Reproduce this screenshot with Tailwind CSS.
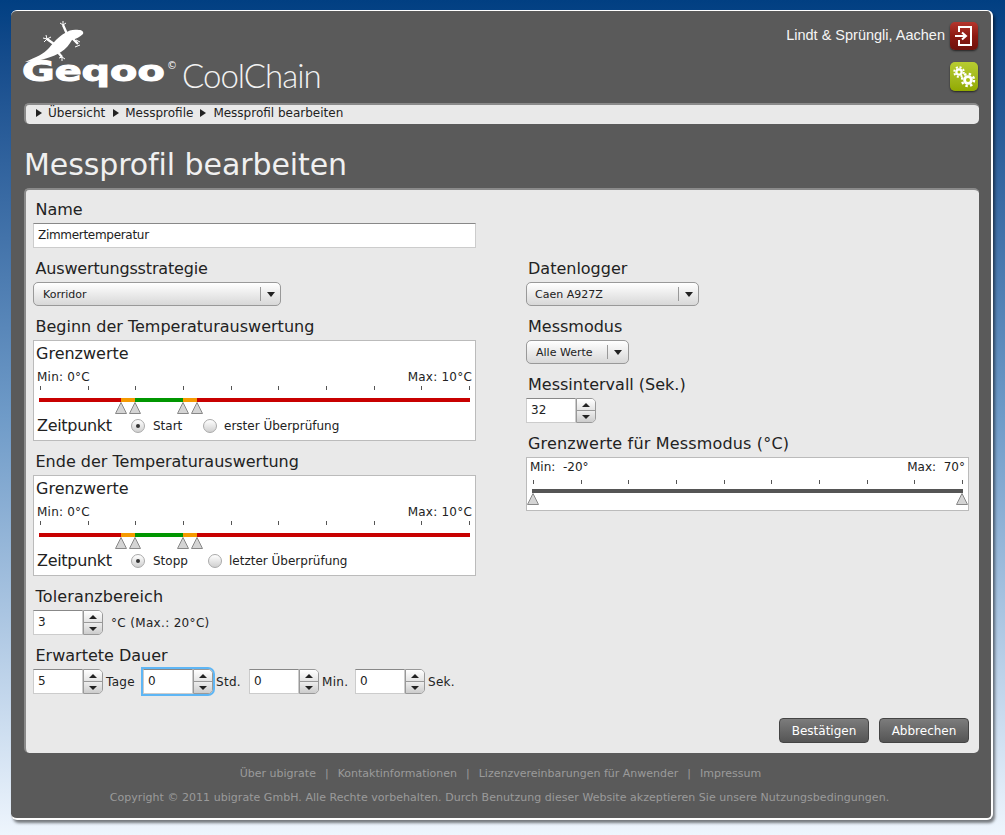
<!DOCTYPE html>
<html lang="de">
<head>
    <meta charset="UTF-8">
    <title>Messprofil bearbeiten</title>
    <script src="https://cdn.jsdelivr.net/npm/@tailwindcss/browser@4"></script>
</head>
<body class="h-[835px] overflow-hidden bg-gradient-to-b from-[#013f82] via-[#6f9bc8] to-[#eef5fd] [font-family:'DejaVu_Sans',sans-serif] text-[#222]">
    <div class="ml-[11px] pt-[10px]">
        <div class="w-[982px] h-[810px] bg-[#5a5a5a] rounded-[6px] border-t border-r-2 border-b-2 border-white shadow-[2px_3px_3px_rgba(0,0,0,0.5)] pl-[13px] pr-[12px]">

            <!-- Kopfbereich -->
            <div class="flex justify-between h-[92px]">
                <div class="relative w-[310px]">
                    <svg class="absolute left-[-4px] top-[5px]" width="70" height="50" viewBox="20 15 70 50" fill="white" stroke="white">
                        <path stroke="none" d="M25 61C36 56 44 53 49 47C54 41 58 36 65 32C69 29 74 28 79 29C82 29 84 31 83 33C80 36 76 38 72 39C69 44 66 48 61 51C54 56 40 60 25 61Z"/>
                        <path fill="none" stroke-width="2.4" d="M67 33L63 24M72 37L78 43M54 43L47 38M56 49L62 56"/>
                        <path fill="none" stroke-width="1" d="M60 22L63 24L66 22M63 24V20M76 39L80 41M75 46L80 44M46 34L47 38L51 36M43 37L47 38L44 41M59 57L62 56L65 58M62 56V60"/>
                    </svg>
                    <span class="absolute left-[-2px] top-[44px] origin-left scale-x-[1.42] font-bold text-[28px] leading-[34px] text-white [-webkit-text-stroke:1px_white]">Geqoo</span>
                    <span class="absolute left-[143px] top-[50px] text-[10px] leading-[10px] text-white">©</span>
                    <span class="absolute left-[158px] top-[45px] [font-family:'Lato',sans-serif] font-light text-[33px] leading-[38px] tracking-[-1px] text-[#f2f2f2]">CoolChain</span>
                </div>
                <div class="flex flex-col items-end pt-[11px] pr-[1px] gap-[12px]">
                    <div class="flex items-center gap-[5px]">
                        <span class="[font-family:'Liberation_Sans',sans-serif] text-[14.5px] text-[#f5f5f5]">Lindt &amp; Sprüngli, Aachen</span>
                        <div class="w-[28px] h-[28px] rounded-[5px] bg-gradient-to-b from-[#b4352d] via-[#8c1a12] to-[#6f130d] shadow-[0_1px_2px_rgba(0,0,0,0.6)]">
                            <svg width="28" height="28" viewBox="0 0 28 28" fill="none" stroke="white" stroke-width="2">
                                <path d="M9 10V5H21V23H9V18"/>
                                <path d="M5 14H15M12 10.5L16 14L12 17.5"/>
                            </svg>
                        </div>
                    </div>
                    <div class="w-[28px] h-[29px] rounded-[5px] bg-gradient-to-b from-[#b8cc30] to-[#92aa00] shadow-[0_1px_2px_rgba(0,0,0,0.6)]">
                        <svg width="28" height="29" viewBox="0 0 28 29" fill="white">
                            <circle cx="9" cy="10" r="3.8"/>
                            <circle cx="9" cy="10" r="4.8" fill="none" stroke="white" stroke-width="2" stroke-dasharray="2 1.77"/>
                            <circle cx="9" cy="10" r="1.5" fill="#a8bf14"/>
                            <circle cx="18" cy="18" r="4.8"/>
                            <circle cx="18" cy="18" r="6" fill="none" stroke="white" stroke-width="2.4" stroke-dasharray="2.4 2.31"/>
                            <circle cx="18" cy="18" r="2" fill="#a8bf14"/>
                        </svg>
                    </div>
                </div>
            </div>

            <!-- Brotkrumen -->
            <div class="h-[21px] rounded-[5px] bg-[#e9e9e9] border-t-2 border-l-2 border-[#8a8a8a] pl-[10px] pb-[3px] flex items-center text-[12px]">
                <span class="w-0 h-0 border-y-[4px] border-y-transparent border-l-[6px] border-l-[#222]"></span>
                <span class="ml-[6px]">Übersicht</span>
                <span class="ml-[8px] w-0 h-0 border-y-[4px] border-y-transparent border-l-[6px] border-l-[#222]"></span>
                <span class="ml-[6px]">Messprofile</span>
                <span class="ml-[7px] w-0 h-0 border-y-[4px] border-y-transparent border-l-[6px] border-l-[#222]"></span>
                <span class="ml-[7px]">Messprofil bearbeiten</span>
            </div>

            <h1 class="h-[64px] pt-[23px] text-[30px] leading-[36px] tracking-[-0.08px] font-normal text-[#f0f0f0] whitespace-nowrap">Messprofil bearbeiten</h1>

            <!-- Formular -->
            <div class="relative h-[565px] rounded-[5px] bg-[#e9e9e9] border-t-2 border-l-2 border-[#8a8a8a] pl-[7px] pt-[9px] grid grid-cols-[443px_443px] gap-x-[50px] content-start">

                <!-- linke Spalte -->
                <div>
                    <label class="block h-5 leading-[22px] mb-1 pl-[2.5px] text-[16px]">Name</label>
                    <div class="h-[25px] mb-2.5 bg-white border border-[#ccc] border-t-[#888] pl-[4px] text-[12px] leading-[22px] tracking-[-0.3px]">Zimmertemperatur</div>

                    <label class="block h-5 leading-[22px] mb-1 pl-[2.5px] text-[16px] tracking-[-0.17px]">Auswertungsstrategie</label>
                    <div class="w-[248px] h-[24px] mb-2.5 flex items-center rounded-[5px] border border-[#999] bg-gradient-to-b from-white to-[#d8d8d8] text-[11px] leading-[24px]">
                        <span class="pl-[9px] w-[226px] pt-[1px]">Korridor</span>
                        <span class="w-px h-[14px] bg-[#999]"></span>
                        <span class="ml-[6px] w-0 h-0 border-x-[4px] border-x-transparent border-t-[5px] border-t-[#222]"></span>
                    </div>

                    <label class="block h-5 leading-[22px] mb-1 pl-[2.5px] text-[16px]">Beginn der Temperaturauswertung</label>
                    <div class="h-[101px] mb-2.5 bg-white border border-[#bbb]">
                        <div class="h-[22px] mt-[2px] pl-[2px] leading-[22px] text-[16px]">Grenzwerte</div>
                        <div class="h-4 mt-[3px] px-[3px] flex justify-between text-[12px] leading-[18px] tracking-[0.22px]"><span>Min: 0°C</span><span>Max: 10°C</span></div>
                        <div class="relative h-[30px] mt-[2px]">
                            <div class="ml-[6px] w-[430px] h-[5px] flex justify-between">
                                <i class="w-px h-[4px] bg-[#555]"></i><i class="w-px h-[4px] bg-[#555]"></i><i class="w-px h-[4px] bg-[#555]"></i><i class="w-px h-[4px] bg-[#555]"></i><i class="w-px h-[4px] bg-[#555]"></i><i class="w-px h-[4px] bg-[#555]"></i><i class="w-px h-[4px] bg-[#555]"></i><i class="w-px h-[4px] bg-[#555]"></i><i class="w-px h-[4px] bg-[#555]"></i><i class="w-px h-[4px] bg-[#555]"></i>
                            </div>
                            <div class="ml-[5px] mt-[7px] w-[431px] h-[4px] flex">
                                <i class="w-[82px] bg-[#c80000]"></i><i class="w-[14px] bg-[#f59a00]"></i><i class="w-[48px] bg-[#009600]"></i><i class="w-[14px] bg-[#f59a00]"></i><i class="flex-1 bg-[#c80000]"></i>
                            </div>
                            <svg class="absolute left-[81px] top-[16px]" width="12" height="12"><path d="M6 .5L11.5 11.5H.5Z" fill="#d4d4d4" stroke="#888"/></svg>
                            <svg class="absolute left-[95px] top-[16px]" width="12" height="12"><path d="M6 .5L11.5 11.5H.5Z" fill="#d4d4d4" stroke="#888"/></svg>
                            <svg class="absolute left-[143px] top-[16px]" width="12" height="12"><path d="M6 .5L11.5 11.5H.5Z" fill="#d4d4d4" stroke="#888"/></svg>
                            <svg class="absolute left-[157px] top-[16px]" width="12" height="12"><path d="M6 .5L11.5 11.5H.5Z" fill="#d4d4d4" stroke="#888"/></svg>
                        </div>
                        <div class="h-5 pl-[3px] flex items-center">
                            <span class="w-[94px] text-[16px] tracking-[-0.3px]">Zeitpunkt</span>
                            <span class="w-[14px] h-[14px] rounded-full border border-[#aaa] bg-gradient-to-b from-white to-[#d0d0d0] flex items-center justify-center"><i class="w-[4px] h-[4px] rounded-full bg-[#333]"></i></span>
                            <span class="ml-[8px] w-[50px] text-[12px]">Start</span>
                            <span class="w-[14px] h-[14px] rounded-full border border-[#aaa] bg-gradient-to-b from-white to-[#d0d0d0]"></span>
                            <span class="ml-[7px] text-[12px]">erster Überprüfung</span>
                        </div>
                    </div>

                    <label class="block h-5 leading-[22px] mb-1 pl-[2.5px] text-[16px]">Ende der Temperaturauswertung</label>
                    <div class="h-[101px] mb-2.5 bg-white border border-[#bbb]">
                        <div class="h-[22px] mt-[2px] pl-[2px] leading-[22px] text-[16px]">Grenzwerte</div>
                        <div class="h-4 mt-[3px] px-[3px] flex justify-between text-[12px] leading-[18px] tracking-[0.22px]"><span>Min: 0°C</span><span>Max: 10°C</span></div>
                        <div class="relative h-[30px] mt-[2px]">
                            <div class="ml-[6px] w-[430px] h-[5px] flex justify-between">
                                <i class="w-px h-[4px] bg-[#555]"></i><i class="w-px h-[4px] bg-[#555]"></i><i class="w-px h-[4px] bg-[#555]"></i><i class="w-px h-[4px] bg-[#555]"></i><i class="w-px h-[4px] bg-[#555]"></i><i class="w-px h-[4px] bg-[#555]"></i><i class="w-px h-[4px] bg-[#555]"></i><i class="w-px h-[4px] bg-[#555]"></i><i class="w-px h-[4px] bg-[#555]"></i><i class="w-px h-[4px] bg-[#555]"></i>
                            </div>
                            <div class="ml-[5px] mt-[7px] w-[431px] h-[4px] flex">
                                <i class="w-[82px] bg-[#c80000]"></i><i class="w-[14px] bg-[#f59a00]"></i><i class="w-[48px] bg-[#009600]"></i><i class="w-[14px] bg-[#f59a00]"></i><i class="flex-1 bg-[#c80000]"></i>
                            </div>
                            <svg class="absolute left-[81px] top-[16px]" width="12" height="12"><path d="M6 .5L11.5 11.5H.5Z" fill="#d4d4d4" stroke="#888"/></svg>
                            <svg class="absolute left-[95px] top-[16px]" width="12" height="12"><path d="M6 .5L11.5 11.5H.5Z" fill="#d4d4d4" stroke="#888"/></svg>
                            <svg class="absolute left-[143px] top-[16px]" width="12" height="12"><path d="M6 .5L11.5 11.5H.5Z" fill="#d4d4d4" stroke="#888"/></svg>
                            <svg class="absolute left-[157px] top-[16px]" width="12" height="12"><path d="M6 .5L11.5 11.5H.5Z" fill="#d4d4d4" stroke="#888"/></svg>
                        </div>
                        <div class="h-5 pl-[3px] flex items-center">
                            <span class="w-[94px] text-[16px] tracking-[-0.3px]">Zeitpunkt</span>
                            <span class="w-[14px] h-[14px] rounded-full border border-[#aaa] bg-gradient-to-b from-white to-[#d0d0d0] flex items-center justify-center"><i class="w-[4px] h-[4px] rounded-full bg-[#333]"></i></span>
                            <span class="ml-[8px] w-[55px] text-[12px]">Stopp</span>
                            <span class="w-[14px] h-[14px] rounded-full border border-[#aaa] bg-gradient-to-b from-white to-[#d0d0d0]"></span>
                            <span class="ml-[7px] text-[12px]">letzter Überprüfung</span>
                        </div>
                    </div>

                    <label class="block h-5 leading-[22px] mb-1 pl-[2.5px] text-[16px] tracking-[0.15px]">Toleranzbereich</label>
                    <div class="h-[25px] mb-2.5 flex items-center text-[12px]">
                        <div class="w-[50px] h-[25px] bg-white border border-[#ccc] border-t-[#888] pl-[4px] leading-[22px]">3</div>
                        <div class="w-[20px] h-[25px] flex flex-col rounded-r-[5px] border border-[#999] overflow-hidden">
                            <span class="h-[12px] flex items-center justify-center bg-gradient-to-b from-white to-[#e4e4e4] border-b border-[#999]"><i class="w-0 h-0 border-x-[4px] border-x-transparent border-b-[4px] border-b-[#222]"></i></span>
                            <span class="flex-1 flex items-center justify-center bg-gradient-to-b from-[#eee] to-[#ccc]"><i class="w-0 h-0 border-x-[4px] border-x-transparent border-t-[4px] border-t-[#222]"></i></span>
                        </div>
                        <span class="ml-[8px] tracking-[0.33px]">°C (Max.: 20°C)</span>
                    </div>

                    <label class="block h-5 leading-[22px] mb-1 pl-[2.5px] text-[16px]">Erwartete Dauer</label>
                    <div class="h-[25px] flex items-center text-[12px] tracking-[0.3px] leading-[22px]">
                        <div class="w-[50px] h-[25px] bg-white border border-[#ccc] border-t-[#888] pl-[4px]">5</div>
                        <div class="w-[20px] h-[25px] flex flex-col rounded-r-[5px] border border-[#999] overflow-hidden">
                            <span class="h-[12px] flex items-center justify-center bg-gradient-to-b from-white to-[#e4e4e4] border-b border-[#999]"><i class="w-0 h-0 border-x-[4px] border-x-transparent border-b-[4px] border-b-[#222]"></i></span>
                            <span class="flex-1 flex items-center justify-center bg-gradient-to-b from-[#eee] to-[#ccc]"><i class="w-0 h-0 border-x-[4px] border-x-transparent border-t-[4px] border-t-[#222]"></i></span>
                        </div>
                        <span class="ml-[3px] w-[37px]">Tage</span>
                        <div class="flex rounded-r-[5px] shadow-[0_0_0_2px_#5eb6f5]">
                            <div class="w-[50px] h-[25px] bg-white border border-[#ccc] border-t-[#888] pl-[4px]">0</div>
                            <div class="w-[20px] h-[25px] flex flex-col rounded-r-[5px] border border-[#999] overflow-hidden">
                                <span class="h-[12px] flex items-center justify-center bg-gradient-to-b from-white to-[#e4e4e4] border-b border-[#999]"><i class="w-0 h-0 border-x-[4px] border-x-transparent border-b-[4px] border-b-[#222]"></i></span>
                                <span class="flex-1 flex items-center justify-center bg-gradient-to-b from-[#eee] to-[#ccc]"><i class="w-0 h-0 border-x-[4px] border-x-transparent border-t-[4px] border-t-[#222]"></i></span>
                            </div>
                        </div>
                        <span class="ml-[3px] w-[33px]">Std.</span>
                        <div class="w-[50px] h-[25px] bg-white border border-[#ccc] border-t-[#888] pl-[4px]">0</div>
                        <div class="w-[20px] h-[25px] flex flex-col rounded-r-[5px] border border-[#999] overflow-hidden">
                            <span class="h-[12px] flex items-center justify-center bg-gradient-to-b from-white to-[#e4e4e4] border-b border-[#999]"><i class="w-0 h-0 border-x-[4px] border-x-transparent border-b-[4px] border-b-[#222]"></i></span>
                            <span class="flex-1 flex items-center justify-center bg-gradient-to-b from-[#eee] to-[#ccc]"><i class="w-0 h-0 border-x-[4px] border-x-transparent border-t-[4px] border-t-[#222]"></i></span>
                        </div>
                        <span class="ml-[3px] w-[33px]">Min.</span>
                        <div class="w-[50px] h-[25px] bg-white border border-[#ccc] border-t-[#888] pl-[4px]">0</div>
                        <div class="w-[20px] h-[25px] flex flex-col rounded-r-[5px] border border-[#999] overflow-hidden">
                            <span class="h-[12px] flex items-center justify-center bg-gradient-to-b from-white to-[#e4e4e4] border-b border-[#999]"><i class="w-0 h-0 border-x-[4px] border-x-transparent border-b-[4px] border-b-[#222]"></i></span>
                            <span class="flex-1 flex items-center justify-center bg-gradient-to-b from-[#eee] to-[#ccc]"><i class="w-0 h-0 border-x-[4px] border-x-transparent border-t-[4px] border-t-[#222]"></i></span>
                        </div>
                        <span class="ml-[3px]">Sek.</span>
                    </div>
                </div>

                <!-- rechte Spalte -->
                <div class="pt-[59px]">
                    <label class="block h-5 leading-[22px] mb-1 pl-[2px] text-[16px]">Datenlogger</label>
                    <div class="w-[173px] h-[24px] mb-2.5 flex items-center rounded-[5px] border border-[#999] bg-gradient-to-b from-white to-[#d8d8d8] text-[11px] leading-[24px]">
                        <span class="pl-[8px] w-[151px] pt-[1px]">Caen A927Z</span>
                        <span class="w-px h-[14px] bg-[#999]"></span>
                        <span class="ml-[6px] w-0 h-0 border-x-[4px] border-x-transparent border-t-[5px] border-t-[#222]"></span>
                    </div>

                    <label class="block h-5 leading-[22px] mb-1 pl-[2px] text-[16px]">Messmodus</label>
                    <div class="w-[103px] h-[24px] mb-2.5 flex items-center rounded-[5px] border border-[#999] bg-gradient-to-b from-white to-[#d8d8d8] text-[11px] leading-[24px]">
                        <span class="pl-[9px] w-[80px] pt-[1px]">Alle Werte</span>
                        <span class="w-px h-[14px] bg-[#999]"></span>
                        <span class="ml-[6px] w-0 h-0 border-x-[4px] border-x-transparent border-t-[5px] border-t-[#222]"></span>
                    </div>

                    <label class="block h-5 leading-[22px] mb-1 pl-[2px] text-[16px]">Messintervall (Sek.)</label>
                    <div class="h-[25px] mb-2.5 flex items-center text-[12px]">
                        <div class="w-[50px] h-[25px] bg-white border border-[#ccc] border-t-[#888] pl-[4px] leading-[22px]">32</div>
                        <div class="w-[20px] h-[25px] flex flex-col rounded-r-[5px] border border-[#999] overflow-hidden">
                            <span class="h-[12px] flex items-center justify-center bg-gradient-to-b from-white to-[#e4e4e4] border-b border-[#999]"><i class="w-0 h-0 border-x-[4px] border-x-transparent border-b-[4px] border-b-[#222]"></i></span>
                            <span class="flex-1 flex items-center justify-center bg-gradient-to-b from-[#eee] to-[#ccc]"><i class="w-0 h-0 border-x-[4px] border-x-transparent border-t-[4px] border-t-[#222]"></i></span>
                        </div>
                    </div>

                    <label class="block h-5 leading-[22px] mb-1 pl-[2px] text-[16px] tracking-[0.17px]">Grenzwerte für Messmodus (°C)</label>
                    <div class="h-[54px] bg-white border border-[#bbb]">
                        <div class="h-4 mt-[1px] px-[3px] flex justify-between text-[12px] leading-4"><span>Min:&nbsp; -20°</span><span>Max:&nbsp; 70°</span></div>
                        <div class="relative h-[30px] mt-[5px]">
                            <div class="ml-[6px] w-[430px] h-[5px] flex justify-between">
                                <i class="w-px h-[4px] bg-[#555]"></i><i class="w-px h-[4px] bg-[#555]"></i><i class="w-px h-[4px] bg-[#555]"></i><i class="w-px h-[4px] bg-[#555]"></i><i class="w-px h-[4px] bg-[#555]"></i><i class="w-px h-[4px] bg-[#555]"></i><i class="w-px h-[4px] bg-[#555]"></i><i class="w-px h-[4px] bg-[#555]"></i><i class="w-px h-[4px] bg-[#555]"></i><i class="w-px h-[4px] bg-[#555]"></i>
                            </div>
                            <div class="ml-[5px] mt-[4px] w-[431px] h-[4px] bg-[#555]"></div>
                            <svg class="absolute left-0 top-[13px]" width="12" height="12"><path d="M6 .5L11.5 11.5H.5Z" fill="#d4d4d4" stroke="#888"/></svg>
                            <svg class="absolute left-[429px] top-[13px]" width="12" height="12"><path d="M6 .5L11.5 11.5H.5Z" fill="#d4d4d4" stroke="#888"/></svg>
                        </div>
                    </div>
                </div>

                <!-- Schaltflächen -->
                <div class="absolute right-[10px] bottom-[10px] flex gap-[10px] text-[12px] text-white">
                    <button class="w-[90px] h-[25px] rounded-[4px] border border-[#444] bg-gradient-to-b from-[#7c7c7c] to-[#555]">Bestätigen</button>
                    <button class="w-[90px] h-[25px] rounded-[4px] border border-[#444] bg-gradient-to-b from-[#7c7c7c] to-[#555]">Abbrechen</button>
                </div>
            </div>

            <!-- Fußzeile -->
            <div class="flex justify-center gap-[9px] mt-[13px] pr-[2px] text-[11px] leading-[16px] text-[#9a9a9a]">
                <span>Über ubigrate</span><span>|</span><span>Kontaktinformationen</span><span>|</span><span>Lizenzvereinbarungen für Anwender</span><span>|</span><span>Impressum</span>
            </div>
            <p class="mt-[8px] pr-[4px] text-center text-[11px] leading-[16px] tracking-[0.04px] text-[#9a9a9a] whitespace-nowrap">Copyright © 2011 ubigrate GmbH. Alle Rechte vorbehalten. Durch Benutzung dieser Website akzeptieren Sie unsere Nutzungsbedingungen.</p>
        </div>
    </div>
</body>
</html>
